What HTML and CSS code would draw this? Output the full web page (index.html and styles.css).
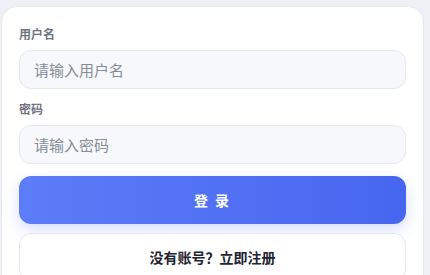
FILE: index.html
```html
<!DOCTYPE html>
<html lang="zh-CN">

<head>
  <meta charset="utf-8">
  <link rel="stylesheet" href="styles.css">
</head>

<body>
  <div class="login-card">
    <div class="form-group">
      <label for="username">用户名</label>
      <input type="text" id="username" placeholder="请输入用户名">
    </div>

    <div class="form-group">
      <label for="password">密码</label>
      <input type="password" id="password" placeholder="请输入密码">
    </div>

    <button class="btn-login">登 录</button>
    <button class="btn-register">没有账号？立即注册</button>
  </div>
</body>

</html>
```

FILE: styles.css
```css
* {
  box-sizing: border-box;
}

body {
  margin: 0;
  padding: 6px 6px 0 1px;
  background-color: #eef0f6;
  font-family: "Noto Sans CJK SC", "Noto Sans", sans-serif;
  overflow: hidden;
}

.login-card {
  background-color: #fff;
  border: 1px solid #e6e9f0;
  border-radius: 16px;
  padding: 18px 17px 20px;
  display: flex;
  flex-direction: column;
}

.form-group {
  display: flex;
  flex-direction: column;
  margin-bottom: 11px;
}

.form-group label {
  font-size: 12px;
  font-weight: 600;
  color: #6e7480;
  line-height: 17px;
  margin-bottom: 8px;
}

.form-group input {
  height: 39px;
  border: 1px solid #e6e8ee;
  border-radius: 12px;
  background-color: #f7f8fb;
  padding: 0 14px;
  font-family: inherit;
  font-size: 15px;
  color: #333;
  outline: none;
}

.form-group input::placeholder {
  color: #868c96;
}

.btn-login,
.btn-register {
  height: 48px;
  border-radius: 12px;
  font-family: inherit;
  font-size: 14px;
  font-weight: 700;
  cursor: pointer;
}

.btn-login {
  margin-top: 1px;
  border: none;
  background: linear-gradient(90deg, #5c7cf8, #4766ef);
  color: #fff;
  letter-spacing: 2px;
  box-shadow: 0 6px 14px rgba(76, 106, 240, 0.22);
}

.btn-register {
  margin-top: 9px;
  border: 1px solid #e5e7ec;
  background-color: #fff;
  color: #1f2430;
}
```
